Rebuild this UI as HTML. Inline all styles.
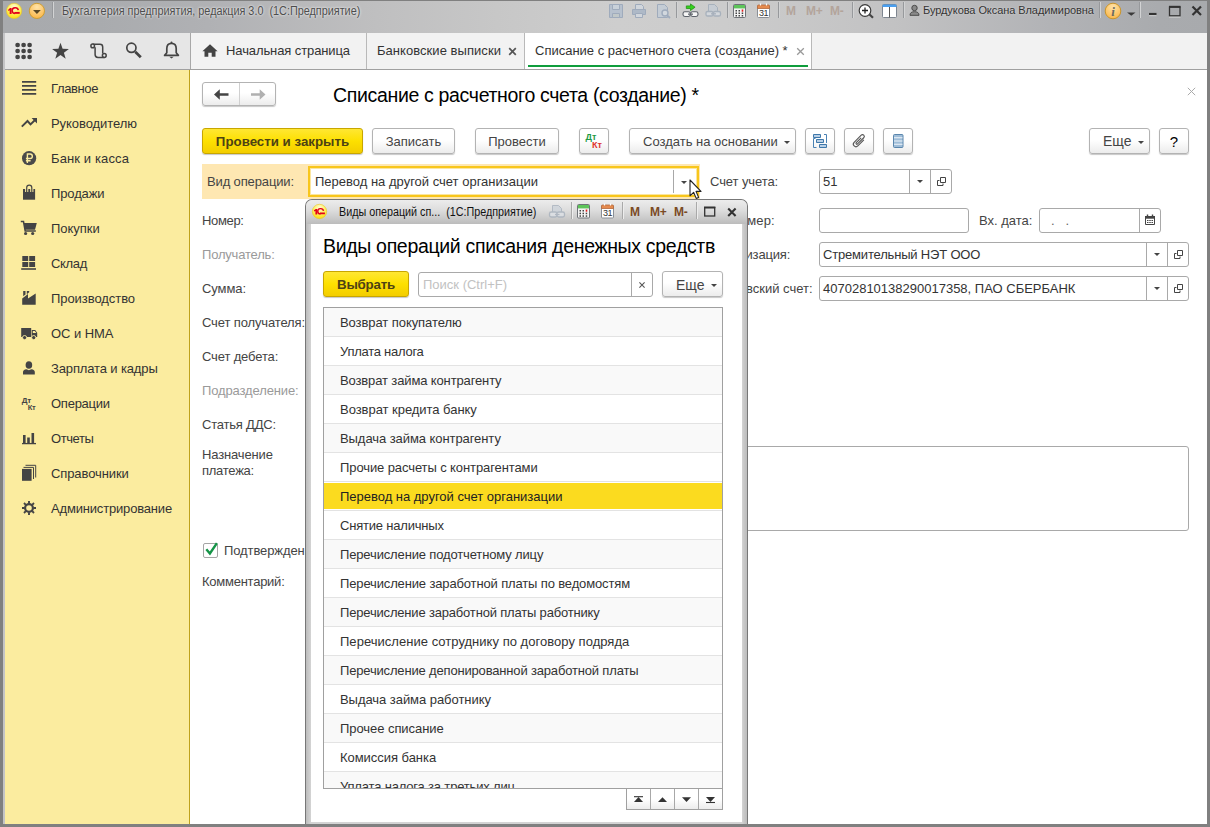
<!DOCTYPE html>
<html lang="ru">
<head>
<meta charset="utf-8">
<title>Списание с расчетного счета (создание) *</title>
<style>
*{box-sizing:border-box;margin:0;padding:0}
html,body{width:1210px;height:827px;overflow:hidden}
body{background:#808080;font-family:"Liberation Sans",sans-serif;font-size:13px;color:#333;position:relative}
.abs{position:absolute}
#lstrip{left:3px;top:1px;width:2px;height:823px;background:#c4c4c6}
#titlebar{left:3px;top:1px;width:1204px;height:32px;background:linear-gradient(90deg,#a8aaad 0%,#a9abae 8%,#b0b1b4 17%,#bfbfc0 31%,#c7c7c7 41%,#cecece 51%,#cccccc 60%,#c2c2c3 74%,#b2b3b6 87%,#a9abae 96%,#a8aaad 100%)}
#titlebar .tt{left:59px;top:3px;font-size:12px;color:#4d4d4d;white-space:pre;text-shadow:0 0 3px #e8e8e8,0 0 2px #e8e8e8;transform:scaleX(.903);transform-origin:0 0}
.mm{top:3px;font-size:12px;font-weight:bold;color:#b3a49b;letter-spacing:-.3px;white-space:pre}
.un{left:920px;top:3px;font-size:11px;color:#333;white-space:pre;letter-spacing:-.07px;text-shadow:0 0 2px #ddd}
.tsep{width:2px;height:16px;top:1px;background:linear-gradient(90deg,#97999c 50%,#d2d3d4 50%)}
#toolrow{left:5px;top:33px;width:1202px;height:36px;background:#f2f2f2}
#toolrow .left{left:0;top:0;width:185px;height:36px;background:#e6e6e6}
#rowline{left:5px;top:69px;width:1202px;height:1px;background:#a0a0a0}
.tab{top:0;height:36px;font-size:13px;color:#333;white-space:pre;border-left:1px solid #b9b9b9}
.tab span{position:absolute;top:10px}
#sidebar{left:5px;top:70px;width:185px;height:754px;background:#fbec9f;border-right:1px solid #bfa21c}
.mi{left:0;width:184px;height:35px}
.mi span{position:absolute;left:46px;top:11px;font-size:13px;line-height:15px;color:#333;white-space:pre;letter-spacing:-0.1px}
.mi svg{position:absolute;left:15px;top:9px}
#content{left:190px;top:70px;width:1017px;height:754px;background:#fff;overflow:hidden}
.lbl{font-size:13px;line-height:16px;color:#444;white-space:pre}
.lbl.g{color:#9a9a9a}
.inp i{position:absolute;top:0;width:1px;height:23px;background:#a9a9a9}
#ptitle{font-size:19.500px;line-height:24px;color:#000;white-space:pre;letter-spacing:-.33px}
.btn{height:26px;padding-top:1px;border:1px solid #b3b3b3;border-radius:3px;background:linear-gradient(#fff,#fff 45%,#ececec);box-shadow:0 1px 1px rgba(0,0,0,.22);font-size:13px;color:#444;text-align:center;line-height:23px;white-space:pre}
.btn.y{background:linear-gradient(#ffe733,#fde000 50%,#f3cd00);border-color:#c8a600;font-weight:bold;color:#4d4214;font-size:13.300px}
.inp{height:25px;border:1px solid #a9a9a9;border-radius:3px;background:#fff;font-size:13px;color:#333;line-height:23px;padding-left:3px;white-space:pre}
#dlg{left:305px;top:199px;width:443px;height:625px;border:1px solid #777;border-bottom:0;border-radius:7px 7px 0 0;background:linear-gradient(90deg,#bcbcbc,#d4d4d4 5px,#d4d4d4 436px,#c8c8c8 438px,#bcbcbc);overflow:hidden}
#dtitle{left:0;top:0;width:441px;height:24px;background:linear-gradient(#ececec,#dcdcdc 45%,#bcbcbc)}
.dsep{top:2px;width:2px;height:17px;background:linear-gradient(90deg,#a9a9a9 50%,#ededed 50%)}
.dm{top:5px;font-size:12px;line-height:14px;font-weight:bold;color:#7a4a25;letter-spacing:-.3px;white-space:pre}
#dbody{left:5px;top:24px;width:431px;height:598px;background:#fff}
#dh{left:12px;top:10px;font-size:19.500px;line-height:24px;color:#000;white-space:pre;letter-spacing:-.32px}
#dlist{left:12px;top:83px;width:400px;height:482px;border:1px solid #a0a0a0;overflow:hidden;background:#fff}
#dlist .r{height:29px;border-bottom:1px solid #e3e3e3;padding-left:16px;font-size:13px;line-height:30px;color:#333;white-space:pre}
#dlist .r.o{background:#f9f9f9}
#dlist .r.sel{background:linear-gradient(#fff 1px,#fbdb1f 1px,#fbdb1f 27px,#fff 27px);color:#222}
#dnav{left:315px;top:564px;width:97px;height:22px;border:1px solid #a0a0a0;background:linear-gradient(#fff,#fff 50%,#ececec);display:flex}
#dnav b{display:block;width:24px;height:20px;border-right:1px solid #a8a8a8}
#dnav b svg{display:block;margin:6px auto 0}
#dnav b:last-child{border-right:0;width:23px}
</style>
</head>
<body>
<div id="lstrip" class="abs"></div>
<div id="titlebar" class="abs">
  <svg class="abs" style="left:0;top:0" width="60" height="24" viewBox="3 1 60 24">
    <defs>
      <radialGradient id="g1c" cx="50%" cy="25%" r="75%"><stop offset="0" stop-color="#fffcd4"/><stop offset=".5" stop-color="#fff169"/><stop offset="1" stop-color="#fbdc10"/></radialGradient>
      <radialGradient id="gor" cx="50%" cy="25%" r="80%"><stop offset="0" stop-color="#ffe3a8"/><stop offset="1" stop-color="#fbb443"/></radialGradient>
    </defs>
    <circle cx="14.100" cy="10.900" r="7.600" fill="url(#g1c)" stroke="#e8c52a" stroke-width=".6"/>
    <path d="M8 9.900l2-1.800h1.600v5.900h-1.900v-3.800l-1.100.7z" fill="#e3001b"/>
    <path d="M18.300 10.100a3.100 2.900 0 1 0-3.200 3.400" fill="none" stroke="#e3001b" stroke-width="1.500"/><path d="M14.500 12.900h5.200" stroke="#e3001b" stroke-width="1.900"/>
    <circle cx="36.900" cy="10.900" r="7.600" fill="url(#gor)" stroke="#c99a2e" stroke-width=".9"/>
    <path d="M33 9.900h7.800l-3.900 4z" fill="#5a4826"/>
  </svg>
  <div class="abs tsep" style="left:49px"></div>
  <div class="abs tt">Бухгалтерия предприятия, редакция 3.0  (1С:Предприятие)</div>
  <!-- disabled save / print / preview -->
  <svg class="abs" style="left:605px;top:2px" width="70" height="18" viewBox="608 3 70 18">
    <g fill="#a9b6c6" stroke="#97a6ba" stroke-width="1" opacity=".85">
      <path d="M609.5 4.5h13v13h-13z" fill="#b3bfce"/><path d="M612.5 4.500h7v5h-7z" fill="#c9d2dc"/><path d="M612.500 13.500h7v4h-7z" fill="#bfc8c9"/>
      <path d="M635.500 9.500v-5h6l2 2v3" fill="#d2d8df"/><path d="M632.500 9.500h13v5h-13z" fill="#a9b6c6"/><path d="M635.500 13.500h7v4h-7z" fill="#d2d8df"/>
      <path d="M657.500 4.500h7l3 3v10h-10z" fill="#c3ccd7"/><circle cx="665" cy="13" r="3" fill="#d4dbe2" stroke-width="1.4"/><path d="M667.300 15.300l2.700 2.700" stroke-width="1.800"/>
    </g>
  </svg>
  <div class="abs tsep" style="left:673px"></div>
  <!-- link icons -->
  <svg class="abs" style="left:677px;top:2px" width="46" height="18" viewBox="680 3 46 18">
    <path d="M686.300 5.900h4.200v-2l4.600 3.300-4.600 3.300v-2h-4.200z" fill="#35d21e" stroke="#1a8a0c" stroke-width=".7"/>
    <rect x="683" y="11.800" width="7.300" height="4.700" rx="1.900" fill="#f6f6f6" stroke="#5d626a" stroke-width="1.100"/>
    <rect x="690.700" y="11.800" width="7.300" height="4.700" rx="1.900" fill="#f6f6f6" stroke="#5d626a" stroke-width="1.100"/>
    <path d="M688 14.150h5" stroke="#5d626a" stroke-width="1.200"/>
    <g opacity=".8"><path d="M708.500 11v-6.500h6l3 3v3.500" fill="#c5ccd5" stroke="#9fabb9"/>
    <rect x="706" y="11.500" width="7" height="4.500" rx="1.600" fill="#d5dae0" stroke="#9fabb9" stroke-width="1.300"/>
    <rect x="713.500" y="11.500" width="7" height="4.500" rx="1.600" fill="#d5dae0" stroke="#9fabb9" stroke-width="1.300"/>
    <path d="M711 13.800h5" stroke="#9fabb9" stroke-width="1.300"/></g>
  </svg>
  <div class="abs tsep" style="left:724px"></div>
  <!-- calculator / calendar -->
  <svg class="abs" style="left:729px;top:2px" width="46" height="18" viewBox="732 3 46 18">
    <rect x="733.500" y="4.500" width="12" height="13" rx="1" fill="#f4f4f4" stroke="#6f7378"/>
    <rect x="734" y="5" width="11" height="3.400" fill="#5ec45a"/>
    <g fill="#444"><rect x="735.500" y="10" width="1.500" height="1.500"/><rect x="738.500" y="10" width="1.500" height="1.500"/><rect x="741.700" y="9.500" width="1.600" height="2.200" fill="#e02020"/>
    <rect x="735.500" y="12.500" width="1.500" height="1.500"/><rect x="738.500" y="12.500" width="1.500" height="1.500"/><rect x="741.700" y="12.500" width="1.500" height="1.500"/>
    <rect x="735.500" y="15" width="1.500" height="1.500"/><rect x="738.500" y="15" width="1.500" height="1.500"/><rect x="741.700" y="15" width="1.500" height="1.500"/></g>
    <rect x="757.500" y="5.500" width="12" height="12" rx="1" fill="#fff" stroke="#8a8f96"/>
    <path d="M757.500 8.500v-2.500q0-1 1-1h10q1 0 1 1v2.500z" fill="#e58a4e" stroke="#b4683a" stroke-width=".8"/>
    <path d="M760.500 3.500v2M766.500 3.500v2" stroke="#fff" stroke-width="1.200"/>
    <text x="763.500" y="16" font-family="Liberation Sans,sans-serif" font-size="9" text-anchor="middle" fill="#333" letter-spacing="-.4">31</text>
  </svg>
  <div class="abs tsep" style="left:775px"></div>
  <div class="abs mm" style="left:783px">M</div><div class="abs mm" style="left:803px">M+</div><div class="abs mm" style="left:827px">M-</div>
  <div class="abs tsep" style="left:849px"></div>
  <!-- zoom / panels -->
  <svg class="abs" style="left:853px;top:2px" width="46" height="18" viewBox="856 3 46 18">
    <path d="M869.300 14.300l3.700 3.400" stroke="#444" stroke-width="2.200"/>
    <circle cx="865" cy="10.500" r="5.800" fill="#fff" stroke="#3c3c3c" stroke-width="1.200"/>
    <path d="M862 10.500h6M865 7.500v6" stroke="#222" stroke-width="1.300"/>
    <rect x="882.500" y="4.500" width="14" height="13" rx="1" fill="#fff" stroke="#7d858f"/>
    <path d="M882.500 7v-1.500q0-1 1-1h12q1 0 1 1v1.500z" fill="#4a9ff0"/>
    <path d="M889.500 7v10.500" stroke="#555" stroke-width="1"/>
  </svg>
  <div class="abs tsep" style="left:900px"></div>
  <svg class="abs" style="left:905px;top:3px" width="14" height="14" viewBox="908 4 14 14">
    <circle cx="914.500" cy="8" r="2.700" fill="#8a8a8a" stroke="#4a4a4a" stroke-width="1"/>
    <path d="M910 15.300q0-3.600 4.500-3.600t4.500 3.600z" fill="#8a8a8a" stroke="#4a4a4a" stroke-width="1"/>
  </svg>
  <div class="abs un">Бурдукова Оксана Владимировна</div>
  <div class="abs tsep" style="left:1096px"></div>
  <svg class="abs" style="left:1100px;top:0" width="36" height="22" viewBox="1103 1 36 22">
    <circle cx="1113" cy="11" r="7.800" fill="url(#gor)" stroke="#c9952c" stroke-width="1"/>
    <text x="1113" y="15.500" font-family="Liberation Serif,serif" font-style="italic" font-weight="bold" font-size="13" text-anchor="middle" fill="#6a6a62">i</text>
    <path d="M1127 12.500h8.500l-4.200 3.300z" fill="#3a3a3a"/>
  </svg>
  <div class="abs tsep" style="left:1136px"></div>
  <svg class="abs" style="left:1142px;top:2px" width="62" height="18" viewBox="1145 3 62 18">
    <path d="M1149 14h7.500" stroke="#333" stroke-width="2.200"/><path d="M1149 15.700h7.500" stroke="#d8d8d8" stroke-width=".8"/>
    <rect x="1169.500" y="7" width="10.500" height="8.800" fill="none" stroke="#333" stroke-width="1.300"/><path d="M1169 6.800h11.500" stroke="#333" stroke-width="2"/><path d="M1169 17.200h11.500" stroke="#d8d8d8" stroke-width=".8"/>
    <path d="M1192.500 6.500l8.500 8.500M1201 6.500l-8.500 8.500" stroke="#333" stroke-width="2.200"/>
  </svg>
</div>
<div id="toolrow" class="abs">
  <div class="abs left">
    <svg class="abs" style="left:0;top:0" width="185" height="36" viewBox="5 33 185 36">
      <g fill="#444">
        <circle cx="17.600" cy="45" r="2.350"/><circle cx="23.600" cy="45" r="2.350"/><circle cx="29.600" cy="45" r="2.350"/>
        <circle cx="17.600" cy="51" r="2.350"/><circle cx="23.600" cy="51" r="2.350"/><circle cx="29.600" cy="51" r="2.350"/>
        <circle cx="17.600" cy="57" r="2.350"/><circle cx="23.600" cy="57" r="2.350"/><circle cx="29.600" cy="57" r="2.350"/>
        <path d="M60.500 42.800l2.100 5.900 6.300.2-5 3.800 1.800 6-5.200-3.600-5.200 3.600 1.800-6-5-3.800 6.300-.2z"/>
      </g>
      <g fill="none" stroke="#444" stroke-width="1.500">
        <path d="M92.600 44.300h7.400q2.700 0 2.700 2.700v6.500M95.100 47.300v7.200q0 2.900 2.900 2.900h6.300"/>
        <circle cx="92.700" cy="45.900" r="1.800" fill="#e6e6e6"/><circle cx="104.300" cy="55.500" r="1.900" fill="#e6e6e6"/>
        <circle cx="131.400" cy="47.800" r="4.600" stroke-width="1.700"/>
      </g>
      <path d="M135.200 51.700l5.600 5.500" stroke="#444" stroke-width="2.700" fill="none"/>
      <path d="M171.500 43.300q4.700 0 4.700 5.200v4.300l2.200 2.600h-13.800l2.200-2.600v-4.300q0-5.200 4.700-5.200z" fill="none" stroke="#444" stroke-width="1.700" stroke-linejoin="round"/>
      <path d="M169.300 56.700h4.400l-2.200 1.900z" fill="#444"/><circle cx="171.500" cy="42.600" r="1" fill="#444"/>
    </svg>
  </div>
  <div class="abs tab" style="left:185px;width:176px;border-left-color:#a8a8a8">
    <svg class="abs" style="left:11px;top:11px" width="16" height="13" viewBox="0 0 16 13"><path d="M8 .3l7.600 6.900h-2.100v5.600h-3.800v-4h-3.400v4h-3.800v-5.600h-2.100z" fill="#444"/></svg>
    <span style="left:35px;letter-spacing:-.1px">Начальная страница</span>
  </div>
  <div class="abs tab" style="left:361px;width:158px">
    <span style="left:10px;letter-spacing:.05px">Банковские выписки</span>
    <svg class="abs" style="left:141px;top:14px" width="9" height="9" viewBox="0 0 9 9"><path d="M1.200 1.200l6.600 6.600M7.800 1.200l-6.600 6.600" stroke="#555" stroke-width="1.700"/></svg>
  </div>
  <div class="abs tab" style="left:519px;width:288px;background:#fff;border-right:1px solid #b9b9b9">
    <span style="left:10px">Списание с расчетного счета (создание) *</span>
    <svg class="abs" style="left:271px;top:14px" width="9" height="9" viewBox="0 0 9 9"><path d="M1.200 1.200l6.600 6.600M7.800 1.200l-6.600 6.600" stroke="#999" stroke-width="1.300"/></svg>
    <div class="abs" style="left:3px;top:32px;width:280px;height:2px;background:#0f9d3c"></div>
  </div>
</div>
<div id="rowline" class="abs"></div>
<div id="sidebar" class="abs">
  <div class="abs mi" style="top:0px"><svg width="18" height="18" viewBox="0 0 18 18"><path d="M2 2.900h14.200M2 6.900h14.200M2 10.900h14.200M2 14.900h14.200" stroke="#444" stroke-width="1.700"/></svg><span style="letter-spacing:-0.38px">Главное</span></div>
  <div class="abs mi" style="top:35px"><svg width="18" height="18" viewBox="0 0 18 18"><path d="M1.800 12.600l5.700-5.600 3 3.400 4.800-4.700" fill="none" stroke="#444" stroke-width="1.900"/><path d="M11.600 4h5.400v5.400z" fill="#444"/></svg><span style="letter-spacing:-0.06px">Руководителю</span></div>
  <div class="abs mi" style="top:70px"><svg width="18" height="18" viewBox="0 0 18 18"><circle cx="9.100" cy="9.200" r="7.100" fill="#4a4a4a"/><path d="M7.400 14v-9h2.700a2.200 2.200 0 0 1 0 4.500h-4.200M5.900 11.700h4.700" fill="none" stroke="#fbec9f" stroke-width="1.400"/></svg><span style="letter-spacing:0.12px">Банк и касса</span></div>
  <div class="abs mi" style="top:105px"><svg width="18" height="18" viewBox="0 0 18 18"><path d="M3 5h12.100v10.700h-12.100z" fill="#444"/><path d="M6.700 8v-4.300a2.550 2.550 0 0 1 5.100 0v4.300" fill="none" stroke="#fbec9f" stroke-width="3.200"/><path d="M6.700 8v-4.300a2.550 2.550 0 0 1 5.100 0v4.300" fill="none" stroke="#444" stroke-width="1.200"/></svg><span style="letter-spacing:-0.13px">Продажи</span></div>
  <div class="abs mi" style="top:140px"><svg width="18" height="18" viewBox="0 0 18 18"><path d="M.800 2.600h2.700l1.700 9.400h10.600" fill="none" stroke="#444" stroke-width="1.500"/><path d="M3.800 4h13l-1.800 6.800h-10z" fill="#444"/><circle cx="5.600" cy="14.500" r="1.600" fill="#444"/><circle cx="12.700" cy="14.500" r="1.600" fill="#444"/></svg><span style="letter-spacing:-0.04px">Покупки</span></div>
  <div class="abs mi" style="top:175px"><svg width="18" height="18" viewBox="0 0 18 18"><path d="M2.300 2h5.900v5h-5.900zM9.200 2h5.900v5h-5.900zM2.300 8h5.900v5h-5.900zM9.200 8h5.900v5h-5.900z" fill="#444"/><path d="M1.200 15h14.800" stroke="#444" stroke-width="1.600"/></svg><span style="letter-spacing:-0.32px">Склад</span></div>
  <div class="abs mi" style="top:210px"><svg width="18" height="18" viewBox="0 0 18 18"><path d="M2.200 15.700v-6.200l5.800-4.500v4.500l7.700-5v11.200z" fill="#444"/><path d="M3.200 2h2.300v3.500l-2.300 1.800zM6.800 2h2.400v1.300l-2.400 1.900z" fill="#444"/></svg><span style="letter-spacing:-0.06px">Производство</span></div>
  <div class="abs mi" style="top:245px"><svg width="18" height="18" viewBox="0 0 18 18"><path d="M1.200 4h10v9h-10zM11.800 6h3.400l2 2.700v4.300h-5.400z" fill="#444"/><path d="M12.800 7h2l1.500 2h-3.500z" fill="#fbec9f"/><circle cx="4.600" cy="13.600" r="2.100" fill="#444" stroke="#fbec9f" stroke-width=".9"/><circle cx="13.700" cy="13.600" r="2.100" fill="#444" stroke="#fbec9f" stroke-width=".9"/></svg><span style="letter-spacing:-0.05px">ОС и НМА</span></div>
  <div class="abs mi" style="top:280px"><svg width="18" height="18" viewBox="0 0 18 18"><ellipse cx="8.900" cy="6" rx="3.300" ry="3.800" fill="#444"/><path d="M3 15.500v-2.500q0-2.300 3.500-2.800l2.400 1 2.400-1q3.500.5 3.500 2.800v2.500z" fill="#444"/></svg><span style="letter-spacing:-0.136px">Зарплата и кадры</span></div>
  <div class="abs mi" style="top:315px"><svg width="18" height="18" viewBox="0 0 18 18"><text x="1.800" y="8.500" font-family="Liberation Sans,sans-serif" font-size="8" font-weight="bold" fill="#444" letter-spacing="-.3">Дт</text><text x="7.800" y="16" font-family="Liberation Sans,sans-serif" font-size="7.500" font-weight="bold" fill="#444" letter-spacing="-.3">Кт</text></svg><span style="letter-spacing:-0.25px">Операции</span></div>
  <div class="abs mi" style="top:350px"><svg width="18" height="18" viewBox="0 0 18 18"><path d="M3 6h2.600v8h-2.600zM7.200 8.500h2.600v5.500h-2.600zM11.500 4h2.600v10h-2.600z" fill="#444"/><path d="M2 14.600h14" stroke="#444" stroke-width="1.300"/></svg><span style="letter-spacing:-0.42px">Отчеты</span></div>
  <div class="abs mi" style="top:385px"><svg width="18" height="18" viewBox="0 0 18 18"><path d="M2 4.900h9.600v11.900h-9.600z" fill="#444"/><path d="M3.500 3.400h10v11.600M5.500 1.300h10.200v12.200" fill="none" stroke="#444" stroke-width="1"/></svg><span style="letter-spacing:-0.1px">Справочники</span></div>
  <div class="abs mi" style="top:420px"><svg width="18" height="18" viewBox="0 0 18 18"><circle cx="9" cy="9" r="3.900" fill="none" stroke="#444" stroke-width="2.200"/><path d="M9 2v2.500M9 13.500v2.500M2 9h2.500M13.500 9h2.500M4 4l1.800 1.800M12.200 12.200l1.800 1.800M14 4l-1.800 1.800M5.800 12.200l-1.800 1.800" stroke="#444" stroke-width="1.900"/></svg><span style="letter-spacing:-0.175px">Администрирование</span></div>
</div>
<div id="content" class="abs">
<div class="abs btn" style="left:12px;top:12px;width:74px;height:24px"><i class="abs" style="left:36px;top:0;width:1px;height:22px;background:#d0d0d0"></i><svg class="abs" style="left:11px;top:6px" width="16" height="11" viewBox="0 0 16 11"><path d="M0 5.500l5.800-5.200v3.900h8.700v2.600h-8.700v3.900z" fill="#444"/></svg><svg class="abs" style="left:47px;top:6px" width="16" height="11" viewBox="0 0 16 11"><path d="M15.500 5.500l-5.800-5.200v3.900h-8.700v2.600h8.700v3.900z" fill="#b0b0b0"/></svg></div>
<div class="abs" id="ptitle" style="left:143px;top:13px">Списание с расчетного счета (создание) *</div>
<svg class="abs" style="left:997px;top:17px" width="9" height="9" viewBox="0 0 9 9"><path d="M.8 .8l7.400 7.400M8.200 .8l-7.400 7.400" stroke="#aaa" stroke-width="1"/></svg>
<div class="abs btn y" style="left:12px;top:58px;width:161px">Провести и закрыть</div>
<div class="abs btn" style="left:182px;top:58px;width:83px">Записать</div>
<div class="abs btn" style="left:285px;top:58px;width:84px">Провести</div>
<div class="abs btn" style="left:389px;top:58px;width:30px"><span class="abs" style="left:5.500px;top:4px;font-size:9px;line-height:9px;font-weight:bold;color:#1e9a44">Дт</span><span class="abs" style="left:12px;top:11.500px;font-size:9px;line-height:9px;font-weight:bold;color:#e0332c">Кт</span></div>
<div class="abs btn" style="left:439px;top:58px;width:167px;text-align:left;padding-left:13px">Создать на основании</div>
<svg class="abs" style="left:593.5px;top:71px" width="6" height="3" viewBox="0 0 6 3"><path d="M0 0h6l-3 3z" fill="#444"/></svg>
<div class="abs btn" style="left:615px;top:58px;width:30px"><svg class="abs" style="left:5px;top:3px" width="17" height="17" viewBox="811 132 17 17"><path d="M815.500 138.500h-2v9h3M824 134.500h2.500v8.500" fill="none" stroke="#4a82b4" stroke-width="1"/><g fill="#b9d0e6" stroke="#3f78ab" stroke-width="1"><path d="M813.500 134.500h7v3h-7zM816.500 139.500h7v3h-7zM819.500 144.500h7v3h-7z"/></g></svg></div>
<div class="abs btn" style="left:654px;top:58px;width:30px"><svg class="abs" style="left:5px;top:3px" width="17" height="17" viewBox="850 132 17 17"><g transform="translate(859.300 140.800) rotate(45)"><path d="M2.600-3.500v8.200a2.600 2.600 0 0 1-5.200 0v-10a1.800 1.800 0 0 1 3.600 0v8.800a.9.900 0 0 1-1.800 0v-6.500" fill="none" stroke="#555" stroke-width="1.100" stroke-linecap="round"/></g></svg></div>
<div class="abs btn" style="left:693px;top:58px;width:30px"><svg class="abs" style="left:5px;top:3px" width="17" height="17" viewBox="889 132 17 17"><rect x="893.500" y="134.500" width="9.500" height="13" rx="1" fill="#9fbdd8" stroke="#5a86ad"/><path d="M894 137.800h8.500M894 141h8.500M894 144.200h8.500" stroke="#f0f5fa" stroke-width="1.100"/></svg></div>
<div class="abs btn" style="left:899px;top:58px;width:61px;text-align:left;padding-left:13px;font-size:14px">Еще</div>
<svg class="abs" style="left:947.5px;top:71px" width="6" height="3" viewBox="0 0 6 3"><path d="M0 0h6l-3 3z" fill="#444"/></svg>
<div class="abs btn" style="left:969px;top:58px;width:30px;font-size:15px;color:#000">?</div>
<div class="abs" style="left:12px;top:94px;width:498px;height:35px;background:#fee7b2"></div>
<div class="abs lbl" style="left:17px;top:103.9px;letter-spacing:-0.13px">Вид операции:</div>
<div class="abs" style="left:118px;top:96px;width:391px;height:31px;border:2px solid #f8c61c;background:#fff;box-shadow:inset 0 0 0 1px #fbe6a0;font-size:13px;line-height:27px;padding-left:5px;white-space:pre;color:#333">Перевод на другой счет организации<i class="abs" style="left:363px;top:2px;width:1px;height:23px;background:#a8a8a8"></i></div>
<svg class="abs" style="left:491px;top:111px" width="6" height="3" viewBox="0 0 6 3"><path d="M0 0h6l-3 3z" fill="#444"/></svg>
<div class="abs lbl" style="left:520px;top:103.9px;letter-spacing:-0.09px">Счет учета:</div>
<div class="abs inp" style="left:629px;top:99px;width:133px;height:25px;">51<i style="left:89px"></i><i style="left:110px"></i></div>
<svg class="abs" style="left:727px;top:110px" width="6" height="3" viewBox="0 0 6 3"><path d="M0 0h6l-3 3z" fill="#444"/></svg>
<svg class="abs" style="left:747px;top:107px" width="9" height="9" viewBox="0 0 9 9"><path d="M3.500 .5h5v5h-5z" fill="none" stroke="#444"/><path d="M2.500 3.500h-2v5h5.500v-2" fill="none" stroke="#444"/></svg>
<div class="abs lbl" style="left:12px;top:143.1px;letter-spacing:-0.35px">Номер:</div>
<div class="abs inp" style="left:118px;top:138px;width:150px;height:25px;"></div>
<div class="abs lbl" style="left:520px;top:143.1px;letter-spacing:0.1px">Вх. номер:</div>
<div class="abs inp" style="left:629px;top:138px;width:150px;height:25px;"></div>
<div class="abs lbl" style="left:789px;top:143.1px;">Вх. дата:</div>
<div class="abs inp" style="left:849px;top:138px;width:122px;height:25px;"><span style="color:#666;padding-left:8px">.   .</span><i style="left:99px"></i></div>
<svg class="abs" style="left:954px;top:144px" width="12" height="12" viewBox="0 0 12 12"><path d="M1.500 2.500h9v8h-9z" fill="#fff" stroke="#444"/><path d="M1 2h10v2.700h-10z" fill="#444"/><path d="M3.500 .5v2M8.500 .5v2" stroke="#444" stroke-width="1.400"/><path d="M3 6.500h1.500M5.250 6.500h1.500M7.500 6.500h1.500M3 8.500h1.500M5.250 8.500h1.500M7.500 8.500h1.500" stroke="#444" stroke-width="1.200"/></svg>
<div class="abs lbl g" style="left:12px;top:177.1px;letter-spacing:-0.19px">Получатель:</div>
<div class="abs inp" style="left:118px;top:172px;width:380px;height:25px;"></div>
<div class="abs lbl" style="left:520px;top:177.1px;;letter-spacing:-.15px">Организация:</div>
<div class="abs inp" style="left:629px;top:172px;width:370px;height:25px;letter-spacing:-.18px">Стремительный НЭТ ООО<i style="left:326px"></i><i style="left:347px"></i></div>
<svg class="abs" style="left:964px;top:183px" width="6" height="3" viewBox="0 0 6 3"><path d="M0 0h6l-3 3z" fill="#444"/></svg>
<svg class="abs" style="left:984px;top:180px" width="9" height="9" viewBox="0 0 9 9"><path d="M3.500 .5h5v5h-5z" fill="none" stroke="#444"/><path d="M2.500 3.500h-2v5h5.500v-2" fill="none" stroke="#444"/></svg>
<div class="abs lbl" style="left:12px;top:211.1px;letter-spacing:-0.07px">Сумма:</div>
<div class="abs inp" style="left:118px;top:206px;width:150px;height:25px;"></div>
<div class="abs lbl" style="left:520px;top:211.1px">Банковский счет:</div>
<div class="abs inp" style="left:629px;top:206px;width:370px;height:25px;">40702810138290017358, ПАО СБЕРБАНК<i style="left:326px"></i><i style="left:347px"></i></div>
<svg class="abs" style="left:964px;top:217px" width="6" height="3" viewBox="0 0 6 3"><path d="M0 0h6l-3 3z" fill="#444"/></svg>
<svg class="abs" style="left:984px;top:214px" width="9" height="9" viewBox="0 0 9 9"><path d="M3.500 .5h5v5h-5z" fill="none" stroke="#444"/><path d="M2.500 3.500h-2v5h5.500v-2" fill="none" stroke="#444"/></svg>
<div class="abs lbl" style="left:12px;top:245.1px;letter-spacing:-0.13px">Счет получателя:</div>
<div class="abs inp" style="left:118px;top:240px;width:380px;height:25px;"></div>
<div class="abs lbl" style="left:12px;top:279.1px;letter-spacing:-0.14px">Счет дебета:</div>
<div class="abs inp" style="left:118px;top:274px;width:150px;height:25px;"></div>
<div class="abs lbl g" style="left:12px;top:313.1px;letter-spacing:-0.13px">Подразделение:</div>
<div class="abs inp" style="left:118px;top:308px;width:380px;height:25px;"></div>
<div class="abs lbl" style="left:12px;top:347.1px;letter-spacing:-0.2px">Статья ДДС:</div>
<div class="abs inp" style="left:118px;top:342px;width:380px;height:25px;"></div>
<div class="abs lbl" style="left:12px;top:376.9px;letter-spacing:-.14px">Назначение<br><span style="letter-spacing:-.26px">платежа:</span></div>
<div class="abs inp" style="left:118px;top:376px;width:881px;height:85px;"></div>
<div class="abs" style="left:13px;top:473px;width:15px;height:15px;border:1px solid #a5a5a5;border-radius:2px;background:#fff"></div>
<svg class="abs" style="left:14px;top:472px" width="15" height="15" viewBox="0 0 15 15"><path d="M2.300 7.300l3.600 4.200 7-10.300" fill="none" stroke="#159447" stroke-width="2.400"/></svg>
<div class="abs lbl" style="left:34px;top:472.5px;letter-spacing:-0.1px">Подтвержден</div>
<div class="abs lbl" style="left:12px;top:504.3px;letter-spacing:-0.25px">Комментарий:</div>
<div class="abs inp" style="left:118px;top:499px;width:380px;height:25px;"></div>
</div>
<div id="dlg" class="abs">
  <div class="abs" id="dtitle">
    <svg class="abs" style="left:5px;top:3px" width="17" height="17" viewBox="0 0 17 17"><circle cx="8.500" cy="8.500" r="7.200" fill="url(#g1c)" stroke="#e8c52a" stroke-width=".6"/><path d="M2.800 7.600l1.900-1.700h1.500v5.500h-1.800v-3.500l-1 .6z" fill="#e3001b"/><path d="M12.500 7.800a2.900 2.700 0 1 0-3 3.200" fill="none" stroke="#e3001b" stroke-width="1.400"/><path d="M9 10.400h4.900" stroke="#e3001b" stroke-width="1.800"/></svg>
    <div class="abs" style="left:33px;top:5px;font-size:12px;line-height:14px;color:#111;white-space:pre;transform:scaleX(.896);transform-origin:0 0">Виды операций сп...  (1С:Предприятие)</div>
    <svg class="abs" style="left:240px;top:2px" width="20" height="18" viewBox="546 202 20 18"><g opacity=".8"><path d="M552.500 212v-6.500h6l3 3v3.500" fill="#cdd3da" stroke="#a7b1bd"/><rect x="549.500" y="212" width="7.500" height="5" rx="1.800" fill="#dde1e6" stroke="#a7b1bd" stroke-width="1.300"/><rect x="557" y="212" width="7.500" height="5" rx="1.800" fill="#dde1e6" stroke="#a7b1bd" stroke-width="1.300"/><path d="M555 214.500h4.500" stroke="#a7b1bd" stroke-width="1.300"/></g></svg>
    <div class="abs dsep" style="left:265px"></div>
    <svg class="abs" style="left:270px;top:2px" width="40" height="18" viewBox="576 202 40 18">
      <rect x="577.500" y="204.500" width="12" height="13.500" rx="1" fill="#f4f4f4" stroke="#6f7378"/><rect x="578" y="205" width="11" height="3.400" fill="#5ec45a"/>
      <g fill="#444"><rect x="579.500" y="210" width="1.500" height="1.500"/><rect x="582.500" y="210" width="1.500" height="1.500"/><rect x="585.700" y="209.500" width="1.600" height="2.200" fill="#e02020"/><rect x="579.500" y="212.700" width="1.500" height="1.500"/><rect x="582.500" y="212.700" width="1.500" height="1.500"/><rect x="585.700" y="212.700" width="1.500" height="1.500"/><rect x="579.500" y="215.300" width="1.500" height="1.500"/><rect x="582.500" y="215.300" width="1.500" height="1.500"/><rect x="585.700" y="215.300" width="1.500" height="1.500"/></g>
      <rect x="601.500" y="205.500" width="12" height="12.500" rx="1" fill="#fff" stroke="#8a8f96"/><path d="M601.500 208.500v-2.500q0-1 1-1h10q1 0 1 1v2.500z" fill="#e58a4e" stroke="#b4683a" stroke-width=".8"/><path d="M604.500 203.500v2M610.500 203.500v2" stroke="#fff" stroke-width="1.200"/>
      <text x="607.500" y="216.300" font-family="Liberation Sans,sans-serif" font-size="9" text-anchor="middle" fill="#333" letter-spacing="-.4">31</text>
    </svg>
    <div class="abs dsep" style="left:316px"></div>
    <div class="abs dm" style="left:324px">M</div><div class="abs dm" style="left:344px">M+</div><div class="abs dm" style="left:368px">M-</div>
    <div class="abs dsep" style="left:390px"></div>
    <svg class="abs" style="left:396px;top:4px" width="38" height="14" viewBox="702 204 38 14"><rect x="704.700" y="207.700" width="10" height="8.300" fill="none" stroke="#333" stroke-width="1.300"/><path d="M704 207.300h11.400" stroke="#333" stroke-width="1.800"/><path d="M728.200 208.600l7.400 7.400M735.600 208.600l-7.400 7.400" stroke="#333" stroke-width="2.100"/></svg>
  </div>
  <div class="abs" id="dbody">
    <div class="abs" id="dh">Виды операций списания денежных средств</div>
    <div class="abs btn y" style="left:12px;top:47px;width:86px;height:26px;line-height:24px;letter-spacing:-.2px">Выбрать</div>
    <div class="abs inp" style="left:107px;top:48px;width:235px;height:25px;line-height:23px;color:#c2c2c2;font-size:13px;padding-left:4px">Поиск (Ctrl+F)<i style="left:212px;height:23px"></i>
      <svg class="abs" style="left:220px;top:9px" width="6" height="6" viewBox="0 0 6 6"><path d="M.4 .4l5.200 5.200M5.600 .4l-5.200 5.200" stroke="#555" stroke-width="1.100"/></svg></div>
    <div class="abs btn" style="left:351px;top:47px;width:61px;height:26px;line-height:24px;text-align:left;padding-left:13px;font-size:14px">Еще</div>
    <svg class="abs" style="left:399.5px;top:60px" width="6" height="3" viewBox="0 0 6 3"><path d="M0 0h6l-3 3z" fill="#444"/></svg>
    <div class="abs" id="dlist">
    <div class="r o" style="letter-spacing:-0.072px">Возврат покупателю</div>
    <div class="r" style="letter-spacing:-0.258px">Уплата налога</div>
    <div class="r o" style="letter-spacing:-0.129px">Возврат займа контрагенту</div>
    <div class="r" style="letter-spacing:-0.039px">Возврат кредита банку</div>
    <div class="r o" style="letter-spacing:-0.071px">Выдача займа контрагенту</div>
    <div class="r" style="letter-spacing:-0.099px">Прочие расчеты с контрагентами</div>
    <div class="r sel" style="letter-spacing:-0.016px">Перевод на другой счет организации</div>
    <div class="r" style="letter-spacing:-0.201px">Снятие наличных</div>
    <div class="r o" style="letter-spacing:-0.145px">Перечисление подотчетному лицу</div>
    <div class="r" style="letter-spacing:-0.14px">Перечисление заработной платы по ведомостям</div>
    <div class="r o" style="letter-spacing:-0.179px">Перечисление заработной платы работнику</div>
    <div class="r" style="letter-spacing:0.031px">Перечисление сотруднику по договору подряда</div>
    <div class="r o" style="letter-spacing:-0.169px">Перечисление депонированной заработной платы</div>
    <div class="r" style="letter-spacing:-0.049px">Выдача займа работнику</div>
    <div class="r o" style="letter-spacing:-0.059px">Прочее списание</div>
    <div class="r" style="letter-spacing:-0.042px">Комиссия банка</div>
    <div class="r o" style="letter-spacing:-0.177px">Уплата налога за третьих лиц</div>
    </div>
    <div class="abs" id="dnav">
      <b><svg width="11" height="9" viewBox="0 0 11 9"><path d="M1 1.700h9" stroke="#333" stroke-width="1.100"/><path d="M5.500 2l4.500 5h-9z" fill="#333"/></svg></b>
      <b><svg width="11" height="9" viewBox="0 0 11 9"><path d="M5.500 2.200l4.500 4.800h-9z" fill="#333"/></svg></b>
      <b><svg width="11" height="9" viewBox="0 0 11 9"><path d="M5.500 7l4.500-4.800h-9z" fill="#333"/></svg></b>
      <b><svg width="11" height="9" viewBox="0 0 11 9"><path d="M1 7.500h9" stroke="#333" stroke-width="1.100"/><path d="M5.500 7l4.500-5h-9z" fill="#333"/></svg></b>
    </div>
  </div>
</div>
<svg class="abs" style="left:689px;top:179px" width="14" height="22" viewBox="0 0 14 22"><path d="M1 1v15.800l3.600-3.500 2.600 6.100 2.400-1-2.600-6h5z" fill="#fff" stroke="#222" stroke-width="1.100" stroke-linejoin="round"/></svg>
</body>
</html>
